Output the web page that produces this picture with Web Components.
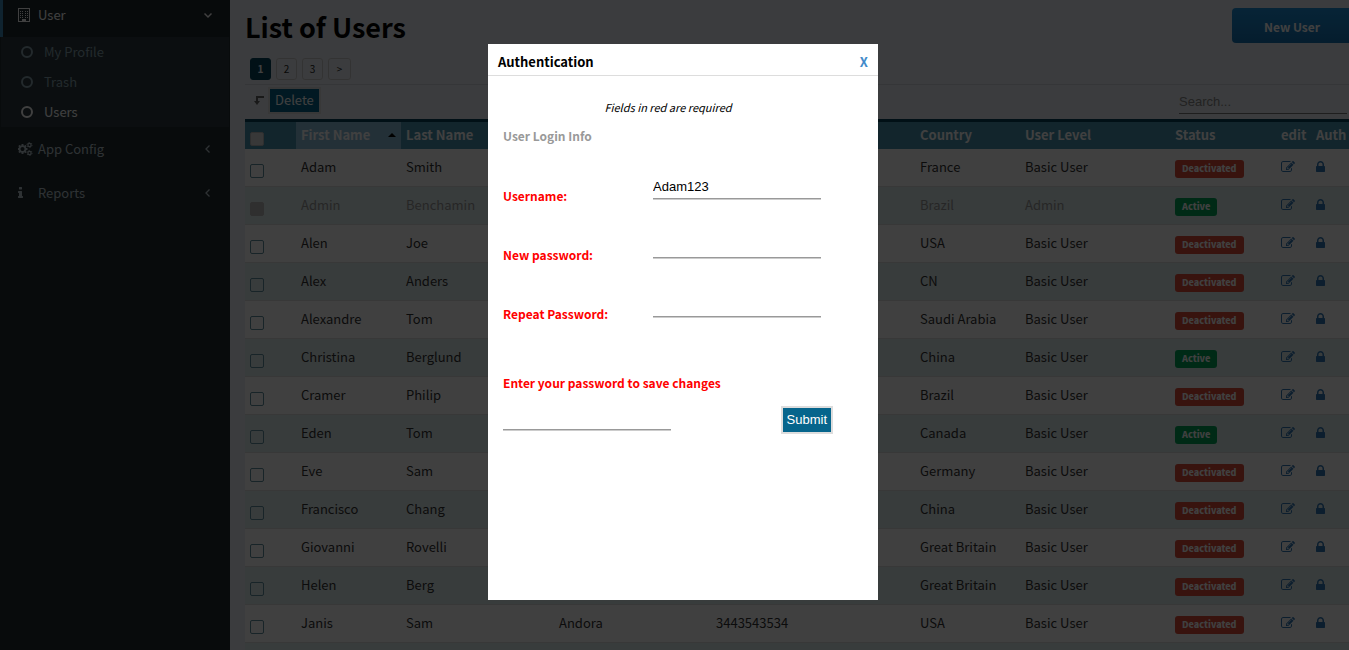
<!DOCTYPE html>
<html lang="en">
<head>
<meta charset="utf-8">
<title>List of Users</title>
<style>
html, body { margin: 0; height: 100%; overflow: hidden; }
body { font: 13px/20px "Noto Sans CJK SC", "Open Sans", sans-serif; color: #333; background: #ecf0f5; }
</style>
</head>
<body>
<user-app></user-app>
<script>
const define = (name, html, setup) => customElements.define(name, class extends HTMLElement {
  constructor() {
    super();
    const t = document.createElement('template');
    t.innerHTML = '<style>*{box-sizing:border-box}</style>' + html;
    this.attachShadow({ mode: 'open' }).append(t.content.cloneNode(true));
  }
  connectedCallback() { if (setup) setup(this, this.shadowRoot); }
});

const windows = [2, 4, 7, 9].map(x => [3, 5, 7, 9].map(y => `<rect x="${x}" y="${y}" width="1" height="1"/>`).join('')).join('');
const ICONS = {
  building: ['0 0 12 14', `<path fill-rule="evenodd" d="M0 0h12v14H0zM1 1v12h3v-2h4v2h3V1z"/>${windows}`],
  circle: ['0 0 12 12', '<circle cx="6" cy="6" r="5" fill="none" stroke="currentColor" stroke-width="2"/>'],
  down: ['0 0 8 8', '<path d="M.5 2.5 4 6l3.500-3.500" fill="none" stroke="currentColor" stroke-width="1.500"/>'],
  left: ['0 0 8 8', '<path d="M5.500.5 2 4l3.500 3.500" fill="none" stroke="currentColor" stroke-width="1.300"/>'],
  level: ['0 0 10 9', '<path d="M2 0h8v2H4v3h2L3 9 0 5h2z"/>'],
  sort: ['0 0 8 4', '<path d="M0 4 4 0l4 4z"/>'],
  edit: ['0 0 1792 1792', '<path d="M888 1184l116-116-152-152-116 116v56h96v96h56zm440-720q-16-16-33 1l-350 350q-17 17-1 33t33-1l350-350q17-17 1-33zm80 594v190q0 119-84.5 203.5t-203.5 84.5h-832q-119 0-203.5-84.5t-84.5-203.5v-832q0-119 84.5-203.5t203.5-84.5h832q63 0 117 25 15 7 18 23 3 17-9 29l-49 49q-14 14-32 8-23-6-45-6h-832q-66 0-113 47t-47 113v832q0 66 47 113t113 47h832q66 0 113-47t47-113v-126q0-13 9-22l64-64q15-15 35-7t20 29zm-96-738l288 288-672 672h-288v-288zm444 132l-92 92-288-288 92-92q28-28 68-28t68 28l152 152q28 28 28 68t-28 68z"/>'],
  lock: ['320 0 1152 1792', '<path d="M640 768h512v-192q0-106-75-181t-181-75-181 75-75 181v192zm832 96v576q0 40-28 68t-68 28h-960q-40 0-68-28t-28-68v-576q0-40 28-68t68-28h32v-192q0-184 132-316t316-132 316 132 132 316v192h32q40 0 68 28t28 68z"/>'],
  info: ['576 0 640 1792', '<path d="M1216 1344v128q0 26-19 45t-45 19h-512q-26 0-45-19t-19-45v-128q0-26 19-45t45-19h64v-384h-64q-26 0-45-19t-19-45v-128q0-26 19-45t45-19h384q26 0 45 19t19 45v576h64q26 0 45 19t19 45zm-128-1152v192q0 26-19 45t-45 19h-256q-26 0-45-19t-19-45v-192q0-26 19-45t45-19h256q26 0 45 19t19 45z"/>'],
  gears: ['0 0 1920 1792', '<path d="M832 896q0-106-75-181t-181-75-181 75-75 181 75 181 181 75 181-75 75-181zm384-91v185q0 10-7 19.500t-16 10.500l-155 24q-11 35-32 76 34 48 90 115 7 11 7 20 0 12-7 19-23 30-82.500 89.500t-78.500 59.500q-11 0-21-7l-115-90q-37 19-77 31-11 108-23 155-7 24-30 24h-186q-11 0-20-7.500t-10-17.500l-23-153q-34-10-75-31l-118 89q-7 7-20 7-11 0-21-8-144-133-144-160 0-9 7-19 10-14 41-53t47-61q-23-44-35-82l-152-24q-10-1-17-9.500t-7-19.500v-185q0-10 7-19.500t16-10.500l155-24q11-35 32-76-34-48-90-115-7-11-7-20 0-12 7-20 22-30 82-89t79-59q11 0 21 7l115 90q34-18 77-32 11-108 23-154 7-24 30-24h186q11 0 20 7.500t10 17.500l23 153q34 10 75 31l118-89q8-7 20-7 11 0 21 8 144 133 144 160 0 8-7 19-12 16-42 54t-45 60q23 48 34 82l152 23q10 2 17 10.500t7 19.500z"/><g fill="none" stroke="currentColor"><circle cx="1472" cy="384" r="210" stroke-width="160"/><circle cx="1472" cy="384" r="330" stroke-width="110" stroke-dasharray="173 173"/><circle cx="1472" cy="1408" r="210" stroke-width="160"/><circle cx="1472" cy="1408" r="330" stroke-width="110" stroke-dasharray="173 173"/></g>']
};

define('app-icon', `<style>:host{display:inline-flex;flex:none}svg{display:block;width:100%;height:100%;fill:currentColor}</style><svg aria-hidden="true"></svg>`,
  (el, root) => {
    const [box, body] = ICONS[el.getAttribute('name')], svg = root.querySelector('svg');
    svg.setAttribute('viewBox', box);
    svg.innerHTML = body;
  });

define('side-menu', `<style>
:host{display:block;width:230px;flex:none;background:#222d32;color:#b8c7ce}
a{display:flex;align-items:center;color:inherit;text-decoration:none}
.top{height:44px;padding:0 18px 0 18px}
.top span{flex:1}
.top .glyph{display:flex;width:20px}
.active{height:37px;padding:0 18px 7px 15px;border-left:3px solid #3c8dbc;background:#1e282c;color:#fff}
.sub{margin:0 1px;background:#2c3b41;color:#8aa4af}
.sub a{height:30px;padding-left:20px;gap:11px}
.sub a.on{color:#fff}
.glyph app-icon{height:14px}
.b{width:12px}.g{width:15px}.i{width:5px}.c{width:12px;height:12px}.v{width:8px;height:8px}
</style>
<nav>
<a class="top active" href="#user"><div class="glyph"><app-icon class="b" name="building"></app-icon></div><span>User</span><app-icon class="v" name="down"></app-icon></a>
<div class="sub">
<a href="#profile"><app-icon class="c" name="circle"></app-icon>My Profile</a>
<a href="#trash"><app-icon class="c" name="circle"></app-icon>Trash</a>
<a class="on" href="#users"><app-icon class="c" name="circle"></app-icon>Users</a>
</div>
<a class="top" href="#config"><div class="glyph"><app-icon class="g" name="gears"></app-icon></div><span>App Config</span><app-icon class="v" name="left"></app-icon></a>
<a class="top" href="#reports"><div class="glyph"><app-icon class="i" name="info"></app-icon></div><span>Reports</span><app-icon class="v" name="left"></app-icon></a>
</nav>`);

define('page-header', `<style>
:host{display:flex;justify-content:space-between;align-items:flex-start;height:58px;padding-top:8px}
h1{margin:0;font-size:27px;line-height:38px;font-weight:700;color:#000}
button{width:120px;height:35px;margin-right:-3px;padding:2px 0 0;border:0;border-radius:4px;background:linear-gradient(#1d8fd8,#1673b4);color:#fff;font:700 12px/20px "Noto Sans CJK SC",sans-serif}
</style><h1><slot></slot></h1><button type="button">New User</button>`);

define('page-list', `<style>
:host{display:flex;gap:5px;height:27px;padding-left:5px;border-bottom:1px solid #d2d6de}
a{width:21px;height:22px;border:1px solid #ccc;border-radius:3px;text-align:center;text-decoration:none;color:#222;font-size:10px;line-height:20px}
a.on{background:#06445c;border-color:#06445c;color:#fff;font-weight:700}
a.next{width:23px}
</style><a class="on" href="#1">1</a><a href="#2">2</a><a href="#3">3</a><a class="next" href="#next">&gt;</a>`);

define('table-tools', `<style>
:host{display:flex;height:34px;padding:2px 2px 0 9px}
app-icon{width:10px;height:9px;margin:9px 4px 0 0;color:#666}
button{height:27px;padding:0 5px 2px;border:2px solid #ddd;background:#06658c;color:#fff;font:13px/20px "Noto Sans CJK SC",sans-serif}
input{margin-left:auto;width:168px;height:27px;padding:2px 0 0;border:0;border-bottom:1px solid #777;background:none;font:13px/20px "Liberation Sans",sans-serif}
input::placeholder{color:#888}
</style><app-icon name="level"></app-icon><button type="button">Delete</button><input type="search" placeholder="Search..." aria-label="Search">`);

define('status-badge', `<style>
:host{display:inline-block;height:18px;padding:0 7px;border-radius:3px;background:#dd4b39;color:#fff;font-size:9px;line-height:18px;font-weight:900;vertical-align:middle}
:host([active]){background:#00a65a}
</style><slot></slot>`);

const USERS = [
  ['Adam', 'Smith', 'France', 'Basic User', 0], ['Admin', 'Benchamin', 'Brazil', 'Admin', 1],
  ['Alen', 'Joe', 'USA', 'Basic User', 0], ['Alex', 'Anders', 'CN', 'Basic User', 0],
  ['Alexandre', 'Tom', 'Saudi Arabia', 'Basic User', 0], ['Christina', 'Berglund', 'China', 'Basic User', 1],
  ['Cramer', 'Philip', 'Brazil', 'Basic User', 0], ['Eden', 'Tom', 'Canada', 'Basic User', 1],
  ['Eve', 'Sam', 'Germany', 'Basic User', 0], ['Francisco', 'Chang', 'China', 'Basic User', 0],
  ['Giovanni', 'Rovelli', 'Great Britain', 'Basic User', 0], ['Helen', 'Berg', 'Great Britain', 'Basic User', 0],
  ['Janis', 'Sam', 'USA', 'Basic User', 0, 'Andora', '3443543534']
];

define('user-table', `<style>
:host{display:block}
table{width:100%;table-layout:fixed;border-collapse:separate;border-spacing:0;background:#fff}
th,td{padding:0 5px 2px;text-align:left;vertical-align:middle;white-space:nowrap}
th{height:30px;border-top:3px solid #064258;background:#4894b0;color:#fff;font-weight:700}
th.sorted{background:#8cbedc}
th.sorted div{display:flex;justify-content:space-between;align-items:center}
.sorted app-icon{width:8px;height:4px;color:#000}
td{height:38px;border-bottom:1px solid #ddd}
tr:nth-child(even) td{background:#e0eeee}
tr.self td{color:#999}
input{appearance:none;display:block;width:14px;height:14px;margin:8px 0 0;border:1px solid #5f8f9f;border-radius:2px;background:none}
th input{background:#ddd;border-color:#bbb}
input:disabled{background:#bbb;border-color:#bbb}
a{display:block;color:#337ab7}
.e{width:14px;height:14px;display:block}.l{width:9px;height:14px;display:block}
.check{width:51px}.first{width:105px}.last{width:153px}.city{width:157px}.country{width:105px}.level{width:150px}.status{width:106px}.edit{width:35px}.auth{width:38px}
td.status{padding:2px 5px}
</style>
<table><thead><tr>
<th class="check"><input type="checkbox" aria-label="All"></th><th class="first sorted"><div>First Name<app-icon name="sort"></app-icon></div></th><th class="last">Last Name</th><th class="city"></th><th></th>
<th class="country">Country</th><th class="level">User Level</th><th class="status">Status</th><th class="edit">edit</th><th class="auth">Auth</th>
</tr></thead><tbody></tbody></table>`,
  (el, root) => {
    root.querySelector('tbody').innerHTML = USERS.map(([f, l, c, lv, on, city = '', phone = '']) => `<tr${lv === 'Admin' ? ' class="self"' : ''}>
<td><input type="checkbox" aria-label="${f}"${lv === 'Admin' ? ' disabled' : ''}></td><td>${f}</td><td>${l}</td><td>${city}</td><td>${phone}</td><td>${c}</td><td>${lv}</td>
<td class="status"><status-badge${on ? ' active' : ''}>${on ? 'Active' : 'Deactivated'}</status-badge></td>
<td><a href="#edit" aria-label="edit"><app-icon class="e" name="edit"></app-icon></a></td><td><a href="#auth" aria-label="Auth"><app-icon class="l" name="lock"></app-icon></a></td></tr>`).join('') + '<tr><td colspan="10"></td></tr>';
  });

define('form-row', `<style>
:host{display:flex;justify-content:space-between;align-items:flex-start;height:30px;margin-bottom:29px;padding-right:12px}
label{align-self:flex-end;color:#f00;font-size:12px;font-weight:700;line-height:18px}
input{width:168px;height:24px;padding:0;border:0;border-bottom:1px solid #999;box-shadow:0 1px #ccc;background:none;color:#000;font:13px/20px "Liberation Sans",sans-serif}
</style><label for="field"><slot></slot></label><input id="field">`,
  (el, root) => {
    const input = root.querySelector('input');
    input.type = el.getAttribute('type');
    input.value = el.getAttribute('value') || '';
  });

define('auth-dialog', `<style>
:host{position:fixed;inset:0;display:flex;justify-content:center;align-items:flex-start;padding:44px 0 0 17px;background:rgba(0,0,0,.75)}
section{width:390px;height:556px;background:#fff;color:#000}
header{display:flex;justify-content:space-between;height:32px;padding:3px 10px 0;border-bottom:1px solid #ddd;line-height:30px}
h2{margin:0;font-size:13px;line-height:30px;font-weight:700}
a{color:#428bca;font-weight:700;text-decoration:none}
form{width:330px;margin-left:15px}
p{margin:0;padding-top:21px;text-align:center;font-size:11px;line-height:20px;font-style:italic}
h3{margin:9px 0 29px;color:#999;font-size:12px;line-height:20px;font-weight:700}
.confirm{display:block;margin-top:50px;color:#f00;font-size:12px;font-weight:700;line-height:20px}
.send{display:flex;justify-content:space-between;margin-top:13px}
input{width:168px;height:24px;padding:0;border:0;border-bottom:1px solid #999;box-shadow:0 1px #ccc;background:none}
button{height:28px;padding:0 4px;border:2px solid #ddd;background:#06658c;color:#fff;font:13px/20px "Liberation Sans",sans-serif}
</style>
<section role="dialog" aria-label="Authentication">
<header><h2>Authentication</h2><a href="#close">X</a></header>
<form><p>Fields in red are required</p><h3>User Login Info</h3>
<form-row type="text" value="Adam123">Username:</form-row>
<form-row type="password">New password:</form-row>
<form-row type="password">Repeat Password:</form-row>
<label class="confirm" for="confirm">Enter your password to save changes</label>
<div class="send"><input id="confirm" type="password"><button type="button">Submit</button></div>
</form></section>`);

define('user-app', `<style>
:host{display:flex;height:100%}
main{flex:1;min-width:0;overflow:hidden;padding-left:15px}
</style>
<side-menu></side-menu>
<main><page-header>List of Users</page-header><page-list></page-list><table-tools></table-tools><user-table></user-table></main>
<auth-dialog></auth-dialog>`);
</script>
</body>
</html>
